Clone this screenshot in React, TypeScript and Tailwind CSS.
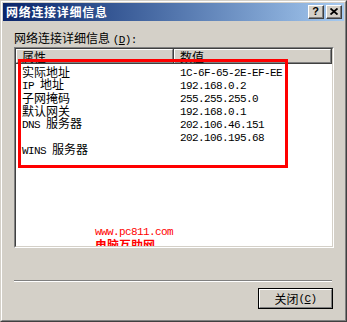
const cjk = { fontFamily: '"Noto Sans CJK SC", "Noto Sans", sans-serif' };

function M({ children }: { children: React.ReactNode }) {
  // half-width latin like SimSun bitmap
  return (
    <span className="text-[11px] tracking-[-0.6px]" style={{ fontFamily: '"Liberation Mono", monospace' }}>
      {children}
    </span>
  );
}

const ROWS: [React.ReactNode, React.ReactNode][] = [
  ["实际地址", <M>1C-6F-65-2E-EF-EE</M>],
  [<><M>IP </M>地址</>, <M>192.168.0.2</M>],
  ["子网掩码", <M>255.255.255.0</M>],
  ["默认网关", <M>192.168.0.1</M>],
  [<><M>DNS </M>服务器</>, <M>202.106.46.151</M>],
  ["", <M>202.106.195.68</M>],
  [<><M>WINS </M>服务器</>, ""],
];

function CaptionButton({ children }: { children: React.ReactNode }) {
  return (
    <div className="h-[14px] w-[16px] border border-t-white border-l-white border-r-[#404040] border-b-[#404040] bg-[#d4d0c8]">
      <div className="flex h-full w-full items-center justify-center border-r border-b border-[#808080]">{children}</div>
    </div>
  );
}

function HeaderCell({ label, className }: { label: string; className: string }) {
  return (
    <div className={`h-[15px] border-r border-b border-[#404040] ${className}`}>
      <div className="flex h-full items-center border-t border-l border-t-white border-l-white border-r border-b border-r-[#808080] border-b-[#808080] bg-[#d4d0c8] pl-[5px] text-[12px] leading-[13px]">
        {label}
      </div>
    </div>
  );
}

export default function App() {
  return (
    <div className="h-[322px] w-[347px] select-none text-black" style={cjk}>
      <div className="h-full w-full border border-t-[#d4d0c8] border-l-[#d4d0c8] border-r-[#404040] border-b-[#404040] bg-[#d4d0c8]">
        <div className="h-full w-full border border-t-white border-l-white border-r-[#808080] border-b-[#808080] p-px">
          {/* title bar */}
          <div className="flex h-[18px] items-center bg-linear-to-r from-[#0a246a] to-[#a6caf0] pl-[3px] pr-[2px]">
            <span className="text-[12px] font-bold leading-[14px] tracking-[0.7px] text-white">网络连接详细信息</span>
            <div className="ml-auto flex gap-[2px]">
              <CaptionButton>
                <span className="text-[11px] font-bold leading-[11px]" style={{ fontFamily: '"Liberation Sans", sans-serif' }}>
                  ?
                </span>
              </CaptionButton>
              <CaptionButton>
                <svg width="8" height="7" viewBox="0 0 8 7">
                  <path d="M0.5 0.5 L7.5 6.5 M7.5 0.5 L0.5 6.5" stroke="black" strokeWidth="1.8" />
                </svg>
              </CaptionButton>
            </div>
          </div>

          <div className="pl-[11px]">
            <div className="mt-[10px] h-[14px] text-[12px] leading-[14px]">
              网络连接详细信息 <M>(<u>D</u>):</M>
            </div>

            {/* list view */}
            <div className="mt-[2px] h-[201px] w-[320px] border border-t-[#808080] border-l-[#808080] border-r-white border-b-white">
              <div className="h-full w-full border border-t-[#404040] border-l-[#404040] border-r-[#d4d0c8] border-b-[#d4d0c8]">
                <div className="relative h-full w-full overflow-hidden bg-white">
                  <div className="flex">
                    <HeaderCell label="属性" className="w-[158px]" />
                    <HeaderCell label="数值" className="flex-1" />
                  </div>
                  <div className="mt-px">
                    {ROWS.map((r, i) => (
                      <div key={i} className="flex h-[13px] items-center text-[12px] leading-[13px]">
                        <div className="w-[158px] pl-[6px]">{r[0]}</div>
                        <div className="pl-[6px]">{r[1]}</div>
                      </div>
                    ))}
                  </div>

                  <div className="absolute left-[2px] top-[10px] h-[109px] w-[270px] border-[3px] border-[#ff0000]" />

                  <div className="absolute left-[79px] top-[178px] text-[#ff0000]">
                    <div className="h-[11px] text-[11px] leading-[11px] tracking-[-0.6px]" style={{ fontFamily: '"Liberation Mono", monospace' }}>
                      www.pc811.com
                    </div>
                    <div className="text-[12px] font-bold leading-[14px]">电脑互助网</div>
                  </div>
                </div>
              </div>
            </div>

            {/* separator */}
            <div className="mt-[32px] w-[318px]">
              <div className="h-px bg-[#808080]" />
              <div className="h-px bg-white" />
            </div>

            <div className="ml-[244px] mt-[6px] h-[21px] w-[75px] border border-black">
              <div className="h-full w-full border border-t-white border-l-white border-r-[#808080] border-b-[#808080] bg-[#d4d0c8]">
                <div className="flex h-full items-center justify-center text-[12px] leading-[14px]">
                  关闭 <M>(<u>C</u>)</M>
                </div>
              </div>
            </div>
          </div>
        </div>
      </div>
    </div>
  );
}
